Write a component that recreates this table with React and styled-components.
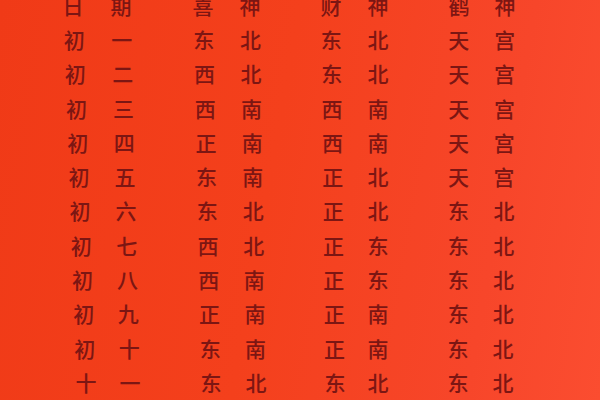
import React from 'react';
import styled, { createGlobalStyle } from 'styled-components';

const GlobalStyle = createGlobalStyle`
  html, body, #root {
    margin: 0;
    padding: 0;
    width: 100%;
    height: 100%;
    overflow: hidden;
  }
  body {
    font-family: "Noto Sans CJK SC", "Noto Sans", sans-serif;
  }
`;

// 黄历表：每行 日期 / 喜神 / 财神 / 鹤神
const rows = [
  ['日', '期', '喜', '神', '财', '神', '鹤', '神'],
  ['初', '一', '东', '北', '东', '北', '天', '宫'],
  ['初', '二', '西', '北', '东', '北', '天', '宫'],
  ['初', '三', '西', '南', '西', '南', '天', '宫'],
  ['初', '四', '正', '南', '西', '南', '天', '宫'],
  ['初', '五', '东', '南', '正', '北', '天', '宫'],
  ['初', '六', '东', '北', '正', '北', '东', '北'],
  ['初', '七', '西', '北', '正', '东', '东', '北'],
  ['初', '八', '西', '南', '正', '东', '东', '北'],
  ['初', '九', '正', '南', '正', '南', '东', '北'],
  ['初', '十', '东', '南', '正', '南', '东', '北'],
  ['十', '一', '东', '北', '东', '北', '东', '北'],
  ['十', '二', '西', '北', '东', '北', '正', '东'],
];

// column centres at the top and bottom row (the photo is a bit skewed)
const topX = [73, 121, 203, 250, 331, 378, 459, 505];
const bottomX = [86, 130, 211, 256, 335, 378, 458, 503];
const CELL = 30;

const centersFor = (i) => {
  const t = i / 11;
  return topX.map((x, c) => x + (bottomX[c] - x) * t);
};

const Page = styled.div`
  width: 100%;
  height: 100%;
  background: linear-gradient(100deg, #f03a17 0%, #f4401c 45%, #f7462a 80%, #fb4d30 100%);
  overflow: hidden;
`;

const Table = styled.div`
  display: flex;
  flex-direction: column;
  margin-top: -12px;
`;

const Row = styled.div`
  display: flex;
  align-items: center;
  height: 34.3px;
`;

const Cell = styled.span`
  flex: 0 0 ${CELL}px;
  margin-left: ${(p) => p.$gap}px;
  text-align: center;
  font-size: 21px;
  font-weight: 500;
  line-height: 1;
  color: #7c1613;
`;

const App = () => {
  return (
    <>
      <GlobalStyle />
      <Page>
        <Table>
          {rows.map((r, i) => {
            const xs = centersFor(i);
            return (
              <Row key={i}>
                {r.map((ch, c) => {
                  const gap = c === 0 ? xs[0] - CELL / 2 : xs[c] - xs[c - 1] - CELL;
                  return (
                    <Cell key={c} $gap={gap}>
                      {ch}
                    </Cell>
                  );
                })}
              </Row>
            );
          })}
        </Table>
      </Page>
    </>
  );
};

export default App;
